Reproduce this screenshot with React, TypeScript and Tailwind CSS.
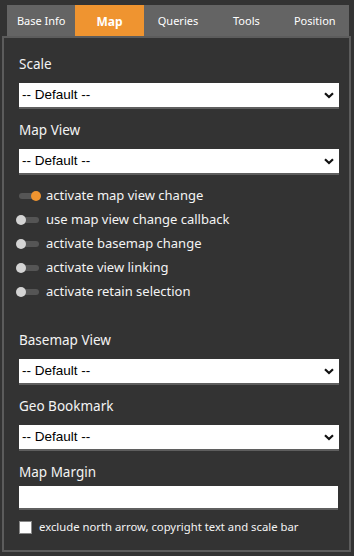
import React from "react";

const TABS = ["Base Info", "Map", "Queries", "Tools", "Position"];

const TOGGLES = [
  { label: "activate map view change", on: true },
  { label: "use map view change callback", on: false },
  { label: "activate basemap change", on: false },
  { label: "activate view linking", on: false },
  { label: "activate retain selection", on: false },
];

function Chevron() {
  return (
    <svg width="10" height="7" viewBox="0 0 10 7" className="pointer-events-none absolute right-[5px] top-[9px]">
      <path d="M1 1.2 L5 5 L9 1.2" fill="none" stroke="#111" strokeWidth="2.2" />
    </svg>
  );
}

function Select() {
  return (
    <div className="relative w-[320px]">
      <select className="block h-[26px] w-full appearance-none border-b-2 border-[#5f5f5f] bg-white pl-[3px] text-[13.5px] text-black outline-none [font-family:'Liberation_Sans',Arial,sans-serif]">
        <option>-- Default --</option>
      </select>
      <Chevron />
    </div>
  );
}

function Label({ children, className = "" }: { children: React.ReactNode; className?: string }) {
  return <div className={`h-[20px] text-[13.5px] leading-[20px] text-[#f4f4f4] ${className}`}>{children}</div>;
}

function Toggle({ on }: { on: boolean }) {
  return (
    <div className="relative ml-[-3px] h-[10px] w-[25px]">
      <div className="absolute left-[3px] top-[2px] h-[6px] w-[20px] rounded-full bg-[#555555]" />
      <div className={`absolute top-0 h-[10px] w-[10px] rounded-full ${on ? "left-[15px] bg-[#ef9430]" : "left-0 bg-[#d4d4d4]"}`} />
    </div>
  );
}

export default function App() {
  return (
    <div className="h-[556px] w-[354px] overflow-hidden bg-[#333333] pt-[5px] [font-family:'Noto_Sans',sans-serif]">
      {/* Tabs */}
      <div className="ml-[7px] grid h-[31px] w-[342px] grid-cols-5 bg-[#646464]">
        {TABS.map((tab) => (
          <div
            key={tab}
            className={`flex items-center justify-center pt-[2px] text-white ${tab === "Map" ? "bg-[#ef9430] text-[12px] font-bold" : "text-[11px]"}`}
          >
            {tab}
          </div>
        ))}
      </div>

      {/* Panel */}
      <div className="ml-[2px] h-[516px] w-[349px] border-2 border-[#5c5c5c] pl-[15px] pt-[16px]">
        <Label>Scale</Label>
        <div className="mt-[9px]">
          <Select />
        </div>
        <Label className="mt-[11px]">Map View</Label>
        <div className="mt-[9px]">
          <Select />
        </div>

        <div className="mt-[9px] flex flex-col">
          {TOGGLES.map((t) => (
            <div key={t.label} className="flex h-[24px] items-center gap-[5px]">
              <Toggle on={t.on} />
              <span className="text-[13px] text-[#f4f4f4]">{t.label}</span>
            </div>
          ))}
        </div>

        <Label className="mt-[26px]">Basemap View</Label>
        <div className="mt-[9px]">
          <Select />
        </div>
        <Label className="mt-[11px]">Geo Bookmark</Label>
        <div className="mt-[9px]">
          <Select />
        </div>
        <Label className="mt-[11px]">Map Margin</Label>
        <input
          type="text"
          className="mt-[4px] block h-[24px] w-[319px] border-b-2 border-[#5f5f5f] bg-white outline-none"
        />
        <label className="mt-[9px] flex items-center gap-[7px]">
          <span className="block h-[13px] w-[13px] border border-[#888] bg-white" />
          <span className="text-[11.3px] text-[#f4f4f4]">exclude north arrow, copyright text and scale bar</span>
        </label>
      </div>
    </div>
  );
}
